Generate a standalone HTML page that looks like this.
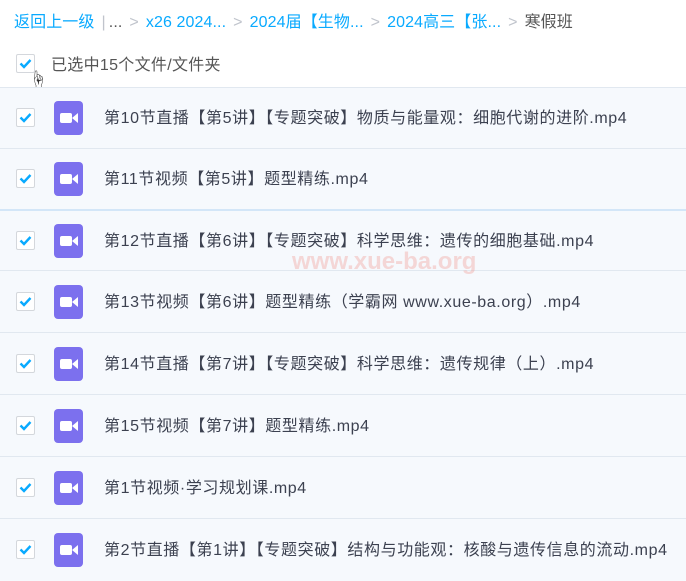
<!DOCTYPE html><html><head><meta charset="utf-8"><style>
body{margin:0;width:686px;height:576px;overflow:hidden;background:#fff;font-family:"Liberation Sans","Noto Sans CJK SC",sans-serif;color:#424e67;}
.bc{position:absolute;left:14px;top:8px;font-size:16px;color:#09aaff;white-space:nowrap;letter-spacing:0.1px}
.bc .g{color:#c0c4cc;margin:0 7px}
.bc .d{color:#555}
.cb{position:absolute;width:17px;height:17px;border:1px solid #d4d7dc;border-radius:2px;background:#fff;}
.cb svg{position:absolute;left:1px;top:1px}
.sel{position:absolute;left:51px;top:51px;font-size:16px;color:#555;letter-spacing:0.3px}
.row{position:absolute;left:0;width:686px;background:#f6f9fd;border-top:1px solid #e1e8f0;}
.row .cb{left:16px;top:50%;margin-top:-10px}
.ic{position:absolute;left:54px;top:50%;margin-top:-17px;width:29px;height:34px;background:#7c70ee;border-radius:4px;}
.ic .cam{position:absolute;left:6px;top:12px;width:12px;height:10px;background:#fff;border-radius:2px}
.ic .tri{position:absolute;left:18px;top:12px;width:0;height:0;border-top:5px solid transparent;border-bottom:5px solid transparent;border-right:6px solid #fff}
.row .t{position:absolute;left:104px;top:50%;margin-top:-10px;font-size:16px;letter-spacing:0.6px;color:#3c4150;white-space:nowrap;line-height:22px}
</style></head><body>
<div class="bc">返回上一级<span class="g">|</span><span class="d" style="margin-left:-4px">...</span><span class="g">&gt;</span>x26 2024...<span class="g">&gt;</span>2024届【生物...<span class="g">&gt;</span>2024高三【张...<span class="g">&gt;</span><span class="d">寒假班</span></div>
<div class="cb" style="left:16px;top:54px"><svg width="15" height="15"><path d="M2.5 7.5l3.5 3.5 6.5-7" stroke="#09aaff" stroke-width="2.4" fill="none"/></svg></div>
<div style="position:absolute;left:29px;top:66px;font-size:18px;color:#333">☝</div>
<div class="sel">已选中15个文件/文件夹</div>
<div class="row" style="top:87px;height:60px"><div class="cb"><svg width="15" height="15"><path d="M2.5 7.5l3.5 3.5 6.5-7" stroke="#09aaff" stroke-width="2.4" fill="none"/></svg></div><div class="ic"><div class="cam"></div><div class="tri"></div></div><div class="t">第10节直播【第5讲】【专题突破】物质与能量观：细胞代谢的进阶.mp4</div></div>
<div class="row" style="top:148px;height:60px"><div class="cb"><svg width="15" height="15"><path d="M2.5 7.5l3.5 3.5 6.5-7" stroke="#09aaff" stroke-width="2.4" fill="none"/></svg></div><div class="ic"><div class="cam"></div><div class="tri"></div></div><div class="t">第11节视频【第5讲】题型精练.mp4</div></div>
<div class="row" style="top:209px;height:60px;border-top:2px solid #d3e6f8"><div class="cb"><svg width="15" height="15"><path d="M2.5 7.5l3.5 3.5 6.5-7" stroke="#09aaff" stroke-width="2.4" fill="none"/></svg></div><div class="ic"><div class="cam"></div><div class="tri"></div></div><div class="t">第12节直播【第6讲】【专题突破】科学思维：遗传的细胞基础.mp4</div></div>
<div class="row" style="top:270px;height:61px"><div class="cb"><svg width="15" height="15"><path d="M2.5 7.5l3.5 3.5 6.5-7" stroke="#09aaff" stroke-width="2.4" fill="none"/></svg></div><div class="ic"><div class="cam"></div><div class="tri"></div></div><div class="t">第13节视频【第6讲】题型精练（学霸网 www.xue-ba.org）.mp4</div></div>
<div style="position:absolute;left:292px;top:248px;font-size:24px;font-weight:bold;color:rgba(240,150,140,0.35)">www.xue-ba.org</div>
<div class="row" style="top:332px;height:61px"><div class="cb"><svg width="15" height="15"><path d="M2.5 7.5l3.5 3.5 6.5-7" stroke="#09aaff" stroke-width="2.4" fill="none"/></svg></div><div class="ic"><div class="cam"></div><div class="tri"></div></div><div class="t">第14节直播【第7讲】【专题突破】科学思维：遗传规律（上）.mp4</div></div>
<div class="row" style="top:394px;height:61px"><div class="cb"><svg width="15" height="15"><path d="M2.5 7.5l3.5 3.5 6.5-7" stroke="#09aaff" stroke-width="2.4" fill="none"/></svg></div><div class="ic"><div class="cam"></div><div class="tri"></div></div><div class="t">第15节视频【第7讲】题型精练.mp4</div></div>
<div class="row" style="top:456px;height:61px"><div class="cb"><svg width="15" height="15"><path d="M2.5 7.5l3.5 3.5 6.5-7" stroke="#09aaff" stroke-width="2.4" fill="none"/></svg></div><div class="ic"><div class="cam"></div><div class="tri"></div></div><div class="t">第1节视频·学习规划课.mp4</div></div>
<div class="row" style="top:518px;height:62px"><div class="cb"><svg width="15" height="15"><path d="M2.5 7.5l3.5 3.5 6.5-7" stroke="#09aaff" stroke-width="2.4" fill="none"/></svg></div><div class="ic"><div class="cam"></div><div class="tri"></div></div><div class="t">第2节直播【第1讲】【专题突破】结构与功能观：核酸与遗传信息的流动.mp4</div></div>
</body></html>
